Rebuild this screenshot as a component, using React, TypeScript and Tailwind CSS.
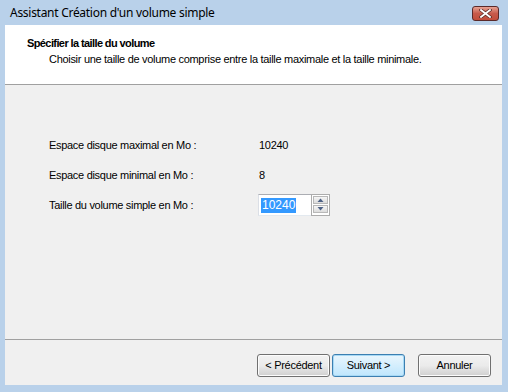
const ui = { fontFamily: '"Liberation Sans", Arial, sans-serif' };

function CloseButton() {
  return (
    <div className="mt-[2px] flex h-[15px] w-[27px] items-center justify-center rounded-[3px] border border-[#5a2a2a] bg-gradient-to-b from-[#e6a294] via-[#c75a4b] to-[#c24d3b]">
      <svg width="13" height="9" viewBox="0 0 13 9">
        <path d="M2 1 L11 8 M11 1 L2 8" stroke="#5b2b25" strokeWidth="3.4" strokeLinecap="square" />
        <path d="M2 1 L11 8 M11 1 L2 8" stroke="#ffffff" strokeWidth="1.8" strokeLinecap="square" />
      </svg>
    </div>
  );
}

function Spinner() {
  return (
    <div className="flex flex-col gap-[1px] border border-[#acacac] bg-white p-[1px]">
      {["up", "down"].map((d) => (
        <div
          key={d}
          className="flex h-[8px] w-[15px] items-center justify-center border border-[#b8b8b8] bg-gradient-to-b from-[#f6f6f6] to-[#dcdcdc]"
        >
          <svg width="7" height="4" viewBox="0 0 7 4">
            {d === "up" ? (
              <path d="M0.5 4 L3.5 0.5 L6.5 4 Z" fill="#4d6185" />
            ) : (
              <path d="M0.5 0 L3.5 3.5 L6.5 0 Z" fill="#4d6185" />
            )}
          </svg>
        </div>
      ))}
    </div>
  );
}

function DialogButton({ label, focused }: { label: string; focused?: boolean }) {
  return (
    <button
      className={
        "h-[23px] w-[73px] rounded-[3px] border text-[11px] tracking-[-0.3px] text-black " +
        (focused
          ? "border-[#3c7fb1] bg-gradient-to-b from-[#eaf6fd] to-[#bee6fd] shadow-[inset_0_0_0_1px_#a7d9f5]"
          : "border-[#707070] bg-gradient-to-b from-[#f2f2f2] via-[#ebebeb] to-[#cfcfcf] shadow-[inset_0_0_0_1px_#fcfcfc]")
      }
    >
      {label}
    </button>
  );
}

export default function App() {
  return (
    <div className="flex h-[392px] w-[508px] flex-col bg-[#b9d1ea]" style={ui}>
      <div className="flex h-[25px] items-center justify-between pl-[10px] pr-[9px]">
        <span
          className="text-[12px] tracking-[-0.28px] text-black"
          style={{ fontFamily: '"Noto Sans", "Open Sans", sans-serif' }}
        >
          Assistant Création d'un volume simple
        </span>
        <CloseButton />
      </div>

      <div className="ml-[5px] mr-[6px] flex flex-1 flex-col bg-[#f0f0f0] tracking-[-0.3px]">
        <div className="h-[60px] border-b border-[#a0a0a0] bg-white pl-[22px] pt-[11px]">
          <div className="text-[11px] font-bold leading-[14px] tracking-[-0.6px] text-black">
            Spécifier la taille du volume
          </div>
          <div className="pl-[22px] pt-[2px] text-[11px] leading-[14px] text-black">
            Choisir une taille de volume comprise entre la taille maximale et la taille minimale.
          </div>
        </div>

        <div className="flex flex-1 flex-col gap-[8px] pl-[44px] pt-[49px] text-[11px] text-black">
          <div className="flex h-[22px] items-center">
            <span className="w-[210px]">Espace disque maximal en Mo :</span>
            <span>10240</span>
          </div>
          <div className="flex h-[22px] items-center">
            <span className="w-[210px]">Espace disque minimal en Mo :</span>
            <span>8</span>
          </div>
          <div className="flex h-[22px] items-center">
            <span className="w-[209px]">Taille du volume simple en Mo :</span>
            <div className="flex h-[22px]">
              <div className="flex w-[53px] items-center border border-[#abadb3] border-l-[#dbdfe6] border-b-[#e3e9ef] border-r-0 bg-white pl-[2px]">
                <span className="bg-[#3399ff] px-[1px] text-[12px] leading-[15px] tracking-normal text-white">10240</span>
              </div>
              <Spinner />
            </div>
          </div>
        </div>

        <div className="flex h-[46px] justify-end gap-[13px] border-t border-[#a0a0a0] pr-[11px] pt-[14px]">
          <div className="flex gap-[2px]">
            <DialogButton label="< Précédent" />
            <DialogButton label="Suivant >" focused />
          </div>
          <DialogButton label="Annuler" />
        </div>
      </div>
      <div className="h-[7px]" />
    </div>
  );
}
